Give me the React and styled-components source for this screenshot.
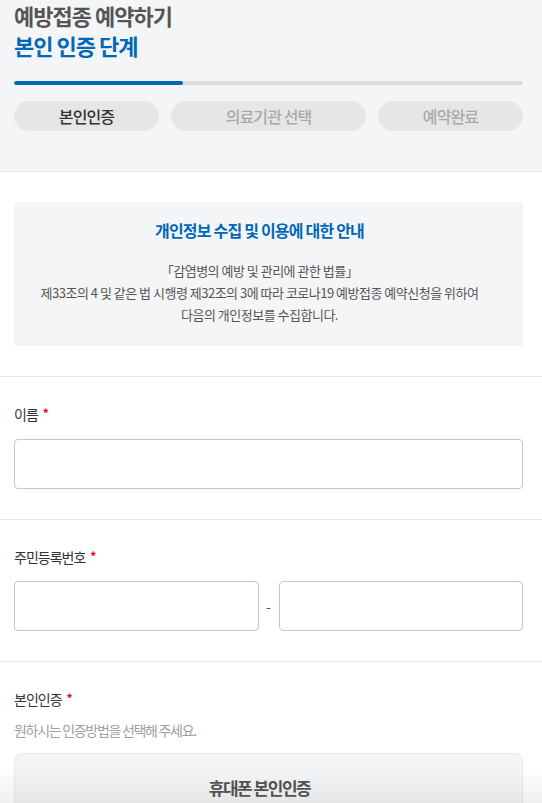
import React from 'react'
import styled, { createGlobalStyle } from 'styled-components'

const GlobalStyle = createGlobalStyle`
  html, body {
    margin: 0;
    padding: 0;
    background: #fff;
  }
  body {
    font-family: 'Noto Sans CJK KR', 'Noto Sans', sans-serif;
    color: #333;
  }
  * { box-sizing: border-box; }
`

const steps = [
  { label: '본인인증', active: true },
  { label: '의료기관 선택', active: false },
  { label: '예약완료', active: false },
]

const App = () => {
  return (
    <Page>
      <GlobalStyle />

      <Header>
        <Title>예방접종 예약하기</Title>
        <SubTitle>본인 인증 단계</SubTitle>
        <Progress>
          <ProgressFill style={{ width: `${(169 / 509) * 100}%` }} />
        </Progress>
        <Steps>
          {steps.map((s) => (
            <Step key={s.label} active={s.active}>{s.label}</Step>
          ))}
        </Steps>
      </Header>

      <Section first>
        <Notice>
          <NoticeTitle>개인정보 수집 및 이용에 대한 안내</NoticeTitle>
          <NoticeText>
            「감염병의 예방 및 관리에 관한 법률」<br />
            제33조의 4 및 같은 법 시행령 제32조의 3에 따라 코로나19 예방접종 예약신청을 위하여<br />
            다음의 개인정보를 수집합니다.
          </NoticeText>
        </Notice>
      </Section>

      <Section>
        <Label>이름<Req>*</Req></Label>
        <Input type="text" />
      </Section>

      <Section>
        <Label>주민등록번호<Req>*</Req></Label>
        <InputRow>
          <Input type="text" />
          <Dash>-</Dash>
          <Input type="password" />
        </InputRow>
      </Section>

      <Section last>
        <Label>본인인증<Req>*</Req></Label>
        <Hint>원하시는 인증방법을 선택해 주세요.</Hint>
        <AuthButton>휴대폰 본인인증</AuthButton>
      </Section>

      <BottomFade />
    </Page>
  )
}

const Page = styled.div`
  width: 100%;
  min-height: 803px;
  background: #fff;
`

const Header = styled.header`
  background: #f4f5f7;
  padding: 0 19px 40px 14px;
  border-bottom: 1px solid #e8e8ee;
`

const Title = styled.h1`
  margin: 0;
  font-size: 22px;
  line-height: 30px;
  font-weight: 700;
  letter-spacing: -1px;
  color: #555;
`

const SubTitle = styled.h2`
  margin: 0;
  font-size: 22px;
  line-height: 30px;
  font-weight: 700;
  letter-spacing: -1px;
  color: #0068b7;
`

const Progress = styled.div`
  margin-top: 21px;
  height: 4px;
  border-radius: 2px;
  background: #dcdcdc;
  overflow: hidden;
`

const ProgressFill = styled.div`
  height: 100%;
  background: #0068b7;
  border-radius: 2px;
`

const Steps = styled.div`
  margin-top: 16px;
  display: grid;
  grid-template-columns: 145fr 195fr 145fr;
  gap: 12px;
`

const Step = styled.div`
  height: 30px;
  border-radius: 15px;
  background: #e6e6e6;
  display: flex;
  align-items: center;
  justify-content: center;
  font-size: 16px;
  font-weight: 500;
  letter-spacing: -0.9px;
  color: ${(p) => (p.active ? '#333' : '#a9a9a9')};
`

const Section = styled.section`
  padding: ${(p) => (p.first ? '30px' : '26px')} 19px 30px 14px;
  border-bottom: ${(p) => (p.last ? 'none' : '1px solid #e8e8ee')};
`

const Notice = styled.div`
  background: #f4f5f7;
  padding: 16px 28px 20px 10px;
  text-align: center;
`

const NoticeTitle = styled.h3`
  margin: 0;
  font-size: 16px;
  line-height: 24px;
  font-weight: 700;
  letter-spacing: -0.8px;
  color: #0068b7;
`

const NoticeText = styled.p`
  margin: 18px 0 0;
  font-size: 13px;
  line-height: 22px;
  letter-spacing: -0.5px;
  color: #555;
`

const Label = styled.div`
  font-size: 14px;
  line-height: 20px;
  letter-spacing: -1px;
  color: #333;
`

const Req = styled.span`
  margin-left: 5px;
  color: #e60012;
  font-size: 12px;
  font-weight: 700;
  vertical-align: 2px;
`

const Input = styled.input`
  display: block;
  width: 100%;
  height: 50px;
  margin-top: 15px;
  border: 1px solid #c5c5cc;
  border-radius: 4px;
  background: #fff;
  padding: 0 12px;
  font-size: 14px;
  outline: none;
`

const InputRow = styled.div`
  display: flex;
  align-items: center;
  margin-top: 14px;

  ${Input} {
    flex: 1;
    min-width: 0;
    margin-top: 0;
  }
`

const Dash = styled.span`
  width: 20px;
  text-align: center;
  font-size: 14px;
  color: #555;
`

const Hint = styled.div`
  margin-top: 11px;
  font-size: 14px;
  line-height: 20px;
  letter-spacing: -1.3px;
  color: #a0a0a0;
`

const AuthButton = styled.button`
  display: block;
  width: 100%;
  height: 68px;
  margin-top: 13px;
  padding: 0 18px 0 0;
  background: #f4f5f7;
  border: 1px solid #e6e9ee;
  border-radius: 8px;
  font-family: 'Noto Sans CJK KR', 'Noto Sans', sans-serif;
  font-size: 17px;
  font-weight: 700;
  letter-spacing: -1.5px;
  color: #555;
  cursor: pointer;
`

const BottomFade = styled.div`
  position: fixed;
  left: 0;
  right: 0;
  bottom: 0;
  height: 36px;
  pointer-events: none;
  background: linear-gradient(to bottom, rgba(0, 0, 0, 0), rgba(0, 0, 0, 0.06));
`

export default App
